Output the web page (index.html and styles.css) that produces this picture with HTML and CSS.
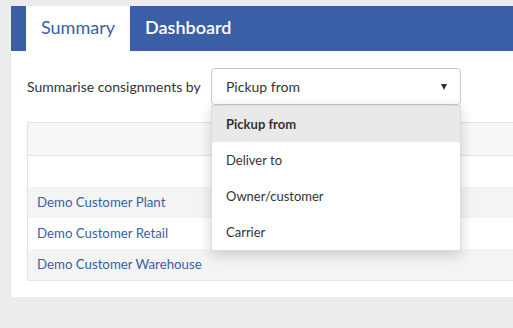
FILE: index.html
```html
<!DOCTYPE html>
<html lang="en">
<head>
    <meta charset="UTF-8">
    <meta name="viewport" content="width=device-width, initial-scale=1.0">
    <title>Consignment Summary</title>
    <link rel="stylesheet" href="styles.css">
</head>
<body>
    <div class="page">
        <!-- Tabs -->
        <nav class="tabs">
            <a href="#" class="tab active">Summary</a>
            <a href="#" class="tab">Dashboard</a>
        </nav>

        <!-- Summary panel -->
        <div class="panel">
            <div class="filter">
                <label>Summarise consignments by</label>
                <div class="select">
                    <div class="select-box">
                        <span>Pickup from</span>
                        <span class="caret"></span>
                    </div>
                    <ul class="select-menu">
                        <li class="selected">Pickup from</li>
                        <li>Deliver to</li>
                        <li>Owner/customer</li>
                        <li>Carrier</li>
                    </ul>
                </div>
            </div>

            <div class="summary-table">
                <div class="table-head"></div>
                <div class="table-row blank"></div>
                <div class="table-row"><a href="#">Demo Customer Plant</a></div>
                <div class="table-row"><a href="#">Demo Customer Retail</a></div>
                <div class="table-row"><a href="#">Demo Customer Warehouse</a></div>
            </div>
        </div>
    </div>
</body>
</html>
```

FILE: styles.css
```css
/* Global styles */
body {
    font-family: Lato, "Liberation Sans", sans-serif;
    margin: 0;
    padding: 0;
    background-color: #ececec;
    color: #333;
    overflow: hidden;
}

.page {
    padding: 6px 0 0 11px;
}

/* Tabs */
.tabs {
    display: flex;
    height: 45px;
    padding-left: 15px;
    background-color: #3a5fa6;
}

.tab {
    display: block;
    padding: 0 15px;
    line-height: 42px;
    font-size: 18px;
    color: #fff;
    text-decoration: none;
    font-weight: 600;
}

.tab.active {
    background-color: #fff;
    color: #3a5fa6;
    font-weight: 400;
}

/* Panel */
.panel {
    background-color: #fff;
    padding: 17px 0 16px 16px;
    border-radius: 0 0 0 3px;
}

.filter {
    display: flex;
    align-items: center;
    height: 37px;
}

.filter label {
    font-size: 14px;
    width: 184px;
}

.select {
    position: relative;
}

.select-box {
    display: flex;
    align-items: center;
    justify-content: space-between;
    box-sizing: border-box;
    width: 250px;
    height: 37px;
    padding: 0 13px 0 14px;
    border: 1px solid #c9c9c9;
    border-radius: 4px;
    font-size: 14px;
}

.caret {
    width: 0;
    height: 0;
    border-left: 3.5px solid transparent;
    border-right: 3.5px solid transparent;
    border-top: 6px solid #333;
}

.select-menu {
    position: absolute;
    top: 37px;
    left: 0;
    width: 250px;
    margin: 0;
    padding: 0;
    list-style: none;
    background-color: #fff;
    border: 1px solid #dcdcdc;
    box-sizing: border-box;
    box-shadow: 0 4px 12px rgba(0, 0, 0, 0.18);
    z-index: 10;
}

.select-menu li {
    height: 36px;
    line-height: 36px;
    padding-left: 14px;
    font-size: 13px;
}

.select-menu li.selected {
    background-color: #e9e9e9;
    font-weight: 700;
}

/* Table */
.summary-table {
    margin-top: 17px;
    border: 1px solid #e4e4e4;
    border-right: none;
}

.table-head {
    height: 32px;
    background-color: #f7f7f7;
    border-bottom: 1px solid #e4e4e4;
}

.table-row {
    height: 31px;
    line-height: 31px;
    padding-left: 9px;
    font-size: 13.25px;
}

.table-row:nth-child(odd) {
    background-color: #f4f4f4;
}

.table-row a {
    color: #3a5fa6;
    text-decoration: none;
}
```
